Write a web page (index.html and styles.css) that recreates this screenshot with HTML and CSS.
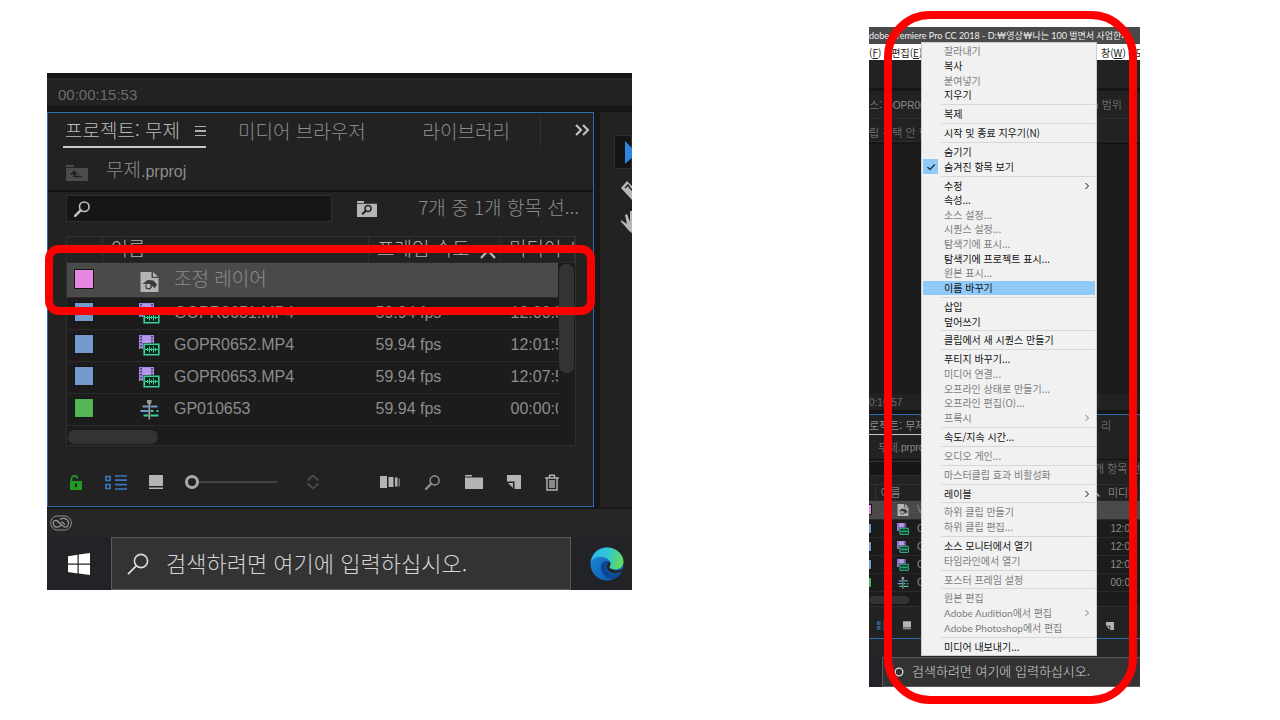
FILE: index.html
```html
<!DOCTYPE html>
<html lang="ko">
<head>
    <meta charset="utf-8" />
    <title>조정 레이어 이름 바꾸기</title>
    <link rel="stylesheet" href="styles.css">
</head>
<body>

<!-- icons -->
<svg class="defs" width="0" height="0" aria-hidden="true">
    <defs>
        <linearGradient id="edgeTop" x1="0" y1="0.3" x2="1" y2="0.5"><stop offset="0" stop-color="#2bb4ee"/><stop offset="0.5" stop-color="#33c8d0"/><stop offset="1" stop-color="#62dc58"/></linearGradient>
        <linearGradient id="edgeLow" x1="0" y1="0" x2="1" y2="1"><stop offset="0" stop-color="#1b8fe0"/><stop offset="1" stop-color="#0c4fa0"/></linearGradient>
    </defs>
    <symbol id="i-find" viewBox="0 0 20 20"><circle cx="12.5" cy="7.5" r="5.3" fill="none" stroke="currentColor" stroke-width="1.8"/><path d="M8.6 11.4 2.4 17.6" stroke="currentColor" stroke-width="2.8" stroke-linecap="round"/></symbol>
    <symbol id="i-thin" viewBox="0 0 22 22"><circle cx="14" cy="8" r="6.6" fill="none" stroke="currentColor" stroke-width="1.6"/><path d="M9.3 12.8 1 21.2" stroke="currentColor" stroke-width="1.8"/></symbol>
    <symbol id="i-up" viewBox="0 0 22 16"><path d="M0 0h8v2H0zM0 3h22v13H0z" fill="#4c4c4c"/><path d="M8 12V7m-3 2.500L8 6.500l3 3M8 11.500h8" fill="none" stroke="#222" stroke-width="1.700"/></symbol>
    <symbol id="i-binfind" viewBox="0 0 20 16"><path d="M0 0h7v2H0zM0 2.800h20V16H0z" fill="#b4b4b4"/><circle cx="11" cy="7.500" r="3" fill="none" stroke="#222" stroke-width="1.500"/><path d="m8.800 9.700-3.600 3.600" stroke="#222" stroke-width="2"/></symbol>
    <symbol id="i-adjust" viewBox="0 0 18 20"><path d="M0 0h11v6h7v14H0z" fill="#b4b4b4"/><path d="m12.500 0 5 4.800h-5z" fill="#b4b4b4"/><path d="m2 12 5-4 6 .5 3.500 4-2.500 4-1.500-2.500-3 3.500-4-.5-1-3.500 2-1.500z" fill="#3a3a3a"/><circle cx="8" cy="14" r="2.200" fill="#b4b4b4"/></symbol>
    <symbol id="i-clip" viewBox="0 0 21 21"><path d="M0 0h15v14H0z" fill="#a786e0"/><path d="M2 1v13M13 1v8" stroke="#3c2c58" stroke-width="1.500" stroke-dasharray="1.500 1.500"/><path d="M4 1h7.500v7H4z" fill="#b49aea"/><path d="M4 8h17v13H4z" fill="#1d1d1d"/><path d="M5.200 9.200h14.600v10.600H5.200z" fill="#0d2a20" stroke="#3ccf95" stroke-width="1.600"/><path d="M6 14.500h13M8.500 13v3M10.500 11.500v6M12.500 13v3M14.500 11.500v6M16.500 13v3" stroke="#3ccf95" stroke-width="1"/></symbol>
    <symbol id="i-seq" viewBox="0 0 20 20"><path d="M3 6.500h6M11 6.500h7M1 11h8" stroke="#6f9bd0" stroke-width="2.200"/><path d="M11 11h3M17 11h2M4 15.500h5M11 15.500h8" stroke="#3ccf95" stroke-width="2.200"/><path d="M9.800 2v17.500" stroke="#999" stroke-width="1.800"/><path d="M7.500 0h4.500v3L9.800 5 7.500 3z" fill="#999"/></symbol>
    <symbol id="i-lock" viewBox="0 0 14 15"><path d="M2.500 6.500v-2a3 3 0 0 1 6-1" fill="none" stroke="#1e9a22" stroke-width="1.800"/><path d="M1 6h12v9H1z" fill="#1e9a22"/><path d="M7 8.500v3.500" stroke="#222" stroke-width="2"/></symbol>
    <symbol id="i-list" viewBox="0 0 22 15"><path d="M1 1.500h4v4H1zM1 9.500h4v4H1z" fill="none" stroke="#3a78be" stroke-width="1.700"/><path d="M10 1h12M10 5.200h12M10 9.600h12M10 14h12" stroke="#3a78be" stroke-width="1.700"/></symbol>
    <symbol id="i-thumb" viewBox="0 0 14 15"><path d="M0 0h14v11H0zM0 12.500h14V14H0z" fill="#b4b4b4"/></symbol>
    <symbol id="i-sort" viewBox="0 0 14 16"><path d="m1.500 6.500 5.500-5 5.500 5M1.500 9.500l5.500 5 5.500-5" fill="none" stroke="#4a4a4a" stroke-width="1.800"/></symbol>
    <symbol id="i-auto" viewBox="0 0 20 12"><path d="M0 0h7v12H0zM8.500 1h5v10h-5zM15 1.500h2.500v9H15z" fill="#b4b4b4"/><path d="M18.500 2.500H20v8h-1.500z" fill="#777"/></symbol>
    <symbol id="i-bin" viewBox="0 0 18 14"><path d="M0 0h7v1.500H0zM0 2.500h18V14H0z" fill="#b4b4b4"/></symbol>
    <symbol id="i-new" viewBox="0 0 14 14"><path d="M0 0h14v14H7.500V6.500H0z" fill="#b4b4b4"/><path d="M1 8h5v5z" fill="#b4b4b4"/></symbol>
    <symbol id="i-trash" viewBox="0 0 14 17"><path d="M0 4h14M4.500 3.500V1.200h5v2.300M2 4.500V16h10V4.500M5 6v8M7 6v8M9 6v8" fill="none" stroke="#b4b4b4" stroke-width="1.400"/></symbol>
    <symbol id="i-win" viewBox="0 0 22 22"><path d="M0 3.200 9.500 1.800v8.700H0zM10.700 1.600 22 0v10.500H10.700zM0 11.700h9.500v8.700L0 19zM10.700 11.700H22V22l-11.300-1.500z" fill="#fff"/></symbol>
    <symbol id="i-cc" viewBox="0 0 22 16"><g fill="none" stroke="#929292"><path d="M7.500 1C3.500 1 .8 4 .8 8s2.800 7 6.700 7h7c4 0 6.800-3 6.800-7s-2.800-7-6.800-7z"/><path d="m9.800 8.500-2-2C5 4 2.800 6.500 3.300 9c.7 3.500 4.500 4 6.700 2l1.800-1.500" stroke-width="1.300"/><path d="m7 5.500 6.500 6c3 1.800 5.800-1 5-4.500-1.200-4-6-4.500-8.500-2.500M11.500 6.500l3.500 3.200" stroke-width="1.300"/></g></symbol>
    <symbol id="i-edge" viewBox="0 0 34 34"><circle cx="17" cy="17" r="16.500" fill="url(#edgeLow)"/><path d="M.8 14.500C2.300 6 9 .5 17 .5c9.500 0 16.500 7 16.500 14 0 5-3.500 8-8.300 8-4 0-6.200-1.800-5.700-3.200.9-2 1.200-3 .5-4.500C18.800 12 15.500 10 11 9.800 6.500 9.600 3 11.500.8 14.500z" fill="url(#edgeTop)"/><path d="M11.500 17c-2 6 1.500 13 8.500 14.500 4.500.8 9-1.500 11.500-6-7 4-14 2-15.500-4-.7-3 1-5.500 3.600-6.500-3-2-7-1-8.100 2z" fill="#0b4796"/><path d="M20 14.800c-2.600 1-4.100 4-3.200 6.800 1.500 4.500 8.500 6.500 15.200 3l1.500-3c-3 2.500-9 2.500-12.500.5-1.800-1-1.700-2.200-1-3.300.8-1.300.7-2.700 0-4z" fill="#23272c"/></symbol>
    <symbol id="i-more" viewBox="0 0 14 12"><path d="m1 1 5 5-5 5M8 1l5 5-5 5" fill="none" stroke="#c0c0c0" stroke-width="2.200"/></symbol>
    <symbol id="i-check" viewBox="0 0 10 10"><path d="m1.500 5 2.500 2.500L8.800 2.500" fill="none" stroke="#16354f" stroke-width="1.300"/></symbol>
    <symbol id="i-next" viewBox="0 0 6 8"><path d="m1.500 1 3 3-3 3" fill="none" stroke="currentColor" stroke-width="1"/></symbol>
    <symbol id="i-asc" viewBox="0 0 16 10"><path d="m1 9 7-7.500L15 9" fill="none" stroke="#b8b8b8" stroke-width="2.200"/></symbol>
</svg>

<main class="slide">

    <!-- project panel -->
    <section class="shot project-shot">
        <div class="screen">
            <div class="source-time">00:00:15:53</div>
            <div class="work">
                <div class="panel">
                    <nav class="tabs">
                        <a class="tab on" href="#">프로젝트: 무제<span class="burger"></span></a>
                        <a class="tab" href="#">미디어 브라우저</a>
                        <a class="tab last" href="#">라이브러리</a>
                        <button class="icon-btn more" aria-label="더 보기"><svg width="14" height="12"><use href="#i-more"/></svg></button>
                    </nav>
                    <div class="path"><svg width="22" height="16"><use href="#i-up"/></svg><span>무제<span class="latin">.prproj</span></span></div>
                    <div class="filter">
                        <label class="find"><svg width="18" height="18"><use href="#i-find"/></svg><input type="text" aria-label="검색"></label>
                        <button class="icon-btn" aria-label="저장소 검색"><svg width="20" height="16"><use href="#i-binfind"/></svg></button>
                        <span class="count">7개 중 1개 항목 선...</span>
                    </div>
                    <div class="list">
                        <table>
                            <colgroup><col class="c-label"><col><col class="c-rate"><col class="c-start"></colgroup>
                            <thead>
                                <tr><th></th><th>이름</th><th>프레임 속도<svg class="asc" width="16" height="10"><use href="#i-asc"/></svg></th><th>미디어 시</th></tr>
                            </thead>
                            <tbody>
                                <tr class="picked"><td><i class="chip pink"></i></td><td><svg width="18" height="20"><use href="#i-adjust"/></svg><span class="ko">조정 레이어</span></td><td></td><td></td></tr>
                                <tr><td><i class="chip blue"></i></td><td><svg width="21" height="21"><use href="#i-clip"/></svg>GOPR0651.MP4</td><td>59.94 fps</td><td>12:00:5</td></tr>
                                <tr><td><i class="chip blue"></i></td><td><svg width="21" height="21"><use href="#i-clip"/></svg>GOPR0652.MP4</td><td>59.94 fps</td><td>12:01:5</td></tr>
                                <tr><td><i class="chip blue"></i></td><td><svg width="21" height="21"><use href="#i-clip"/></svg>GOPR0653.MP4</td><td>59.94 fps</td><td>12:07:5</td></tr>
                                <tr><td><i class="chip green"></i></td><td><svg width="20" height="20"><use href="#i-seq"/></svg>GP010653</td><td>59.94 fps</td><td>00:00:0</td></tr>
                            </tbody>
                        </table>
                        <div class="hscroll"><span></span></div>
                        <div class="vscroll"><span></span></div>
                    </div>
                    <div class="tools">
                        <button class="icon-btn" aria-label="잠금"><svg width="14" height="15"><use href="#i-lock"/></svg></button>
                        <button class="icon-btn" aria-label="목록 보기"><svg width="22" height="15"><use href="#i-list"/></svg></button>
                        <button class="icon-btn" aria-label="아이콘 보기"><svg width="14" height="15"><use href="#i-thumb"/></svg></button>
                        <input class="size" type="range" min="0" max="100" value="0" aria-label="크기">
                        <button class="icon-btn sort" aria-label="정렬"><svg width="14" height="16"><use href="#i-sort"/></svg></button>
                        <div class="actions">
                            <button class="icon-btn" aria-label="시퀀스 자동화"><svg width="20" height="12"><use href="#i-auto"/></svg></button>
                            <button class="icon-btn" aria-label="찾기"><svg width="17" height="17"><use href="#i-find"/></svg></button>
                            <button class="icon-btn" aria-label="새 저장소"><svg width="18" height="14"><use href="#i-bin"/></svg></button>
                            <button class="icon-btn" aria-label="새 항목"><svg width="14" height="14"><use href="#i-new"/></svg></button>
                            <button class="icon-btn" aria-label="지우기"><svg width="14" height="17"><use href="#i-trash"/></svg></button>
                        </div>
                    </div>
                </div>
                <div class="toolbox">
                    <button class="icon-btn arrow" aria-label="선택"><svg width="24" height="32" viewBox="0 0 24 32"><path d="M10 5v23l12-11z" fill="#2f86e0"/></svg></button>
                    <button class="icon-btn" aria-label="자르기"><svg width="24" height="20" viewBox="0 0 24 20"><path d="m7 8 6-7 12 12-7 7z" fill="#b8b8b8"/><path d="m11 8 3-3 2 3 4 4" fill="none" stroke="#222" stroke-width="1.500"/></svg></button>
                    <button class="icon-btn" aria-label="손"><svg width="24" height="22" viewBox="0 0 24 22"><path d="m7 9 6 4-2-9 2-1 3 8 0-11h2v10l2-9h2v11l2-4v14h-6c-4-2-6-7-11-11z" fill="#b8b8b8"/></svg></button>
                </div>
            </div>
            <div class="status"><svg width="22" height="16"><use href="#i-cc"/></svg></div>
            <div class="taskbar">
                <button class="icon-btn start" aria-label="시작"><svg width="22" height="22"><use href="#i-win"/></svg></button>
                <label class="search"><svg width="22" height="22"><use href="#i-thin"/></svg><input type="text" placeholder="검색하려면 여기에 입력하십시오." aria-label="검색"></label>
                <button class="icon-btn edge" aria-label="Edge"><svg width="34" height="34"><use href="#i-edge"/></svg></button>
            </div>
        </div>
        <div class="mark mark-row"></div>
    </section>

    <!-- context menu -->
    <section class="shot menu-shot">
        <div class="screen">
            <div class="titlebar">dobe Premiere Pro CC 2018 - D:₩영상₩나는 100 벌면서 사업한다</div>
            <div class="menubar">
                <span>(<u>F</u>)</span><span>편집(<u>E</u>)</span>
                <span class="far">창(<u>W</u>)</span><span>도</span>
            </div>
            <div class="monitor">
                <div class="m-tabs"><span>스: <span class="latin">GOPR065</span></span><span class="far">n 범위</span></div>
                <div class="m-note">립 선택 안 함</div>
                <div class="m-view"></div>
                <div class="m-time">0:16:57</div>
            </div>
            <div class="panel">
                <div class="tabs"><span class="tab on">로젝트: 무제</span><span class="far">리</span></div>
                <div class="path">무제<span class="latin">.prproj</span></div>
                <div class="filter"><span class="find"></span><span class="count">개 항목 선</span></div>
                <div class="list">
                    <table>
                        <colgroup><col class="c-label"><col><col class="c-start"></colgroup>
                        <thead><tr><th></th><th>이름</th><th><svg class="asc" width="10" height="8"><use href="#i-asc"/></svg>미디어</th></tr></thead>
                        <tbody>
                            <tr class="picked"><td><i class="chip pink"></i></td><td><svg width="12" height="12"><use href="#i-adjust"/></svg>V</td><td></td></tr>
                            <tr><td><i class="chip blue"></i></td><td><svg width="12" height="12"><use href="#i-clip"/></svg>G</td><td>12:00</td></tr>
                            <tr><td><i class="chip blue"></i></td><td><svg width="12" height="12"><use href="#i-clip"/></svg>G</td><td>12:01</td></tr>
                            <tr><td><i class="chip blue"></i></td><td><svg width="12" height="12"><use href="#i-clip"/></svg>G</td><td>12:07</td></tr>
                            <tr><td><i class="chip green"></i></td><td><svg width="12" height="12"><use href="#i-seq"/></svg>G</td><td>00:00</td></tr>
                        </tbody>
                    </table>
                    <div class="hscroll"><span></span></div>
                </div>
                <div class="tools">
                    <svg width="13" height="9"><use href="#i-list"/></svg>
                    <svg width="8" height="9"><use href="#i-thumb"/></svg>
                    <svg class="far" width="8" height="8"><use href="#i-new"/></svg>
                </div>
            </div>
            <div class="status"></div>
            <div class="taskbar">
                <label class="search"><svg width="12" height="12" viewBox="0 0 12 12"><circle cx="6" cy="6" r="3.800" fill="none" stroke="#ddd" stroke-width="1.300"/></svg><input type="text" placeholder="검색하려면 여기에 입력하십시오." aria-label="검색"></label>
            </div>
        </div>

        <div class="menu" role="menu">
            <button role="menuitem" disabled>잘라내기</button>
            <button role="menuitem">복사</button>
            <button role="menuitem" disabled>붙여넣기</button>
            <button role="menuitem">지우기</button>
            <hr>
            <button role="menuitem">복제</button>
            <hr>
            <button role="menuitem">시작 및 종료 지우기(N)</button>
            <hr>
            <button role="menuitem">숨기기</button>
            <button role="menuitem"><span class="tick"><svg width="10" height="10"><use href="#i-check"/></svg></span>숨겨진 항목 보기</button>
            <hr>
            <button role="menuitem">수정<svg class="next" width="6" height="8"><use href="#i-next"/></svg></button>
            <button role="menuitem">속성...</button>
            <button role="menuitem" disabled>소스 설정...</button>
            <button role="menuitem" disabled>시퀀스 설정...</button>
            <button role="menuitem" disabled>탐색기에 표시...</button>
            <button role="menuitem">탐색기에 프로젝트 표시...</button>
            <button role="menuitem" disabled>원본 표시...</button>
            <button role="menuitem" class="hot">이름 바꾸기</button>
            <hr>
            <button role="menuitem">삽입</button>
            <button role="menuitem">덮어쓰기</button>
            <hr>
            <button role="menuitem">클립에서 새 시퀀스 만들기</button>
            <hr>
            <button role="menuitem">푸티지 바꾸기...</button>
            <button role="menuitem" disabled>미디어 연결...</button>
            <button role="menuitem" disabled>오프라인 상태로 만들기...</button>
            <button role="menuitem" disabled>오프라인 편집(O)...</button>
            <button role="menuitem" disabled>프록시<svg class="next" width="6" height="8"><use href="#i-next"/></svg></button>
            <hr>
            <button role="menuitem">속도/지속 시간...</button>
            <hr>
            <button role="menuitem" disabled>오디오 게인...</button>
            <hr>
            <button role="menuitem" disabled>마스터클립 효과 비활성화</button>
            <hr>
            <button role="menuitem">레이블<svg class="next" width="6" height="8"><use href="#i-next"/></svg></button>
            <hr>
            <button role="menuitem" disabled>하위 클립 만들기</button>
            <button role="menuitem" disabled>하위 클립 편집...</button>
            <hr>
            <button role="menuitem">소스 모니터에서 열기</button>
            <button role="menuitem" disabled>타임라인에서 열기</button>
            <hr>
            <button role="menuitem" disabled>포스터 프레임 설정</button>
            <hr>
            <button role="menuitem" disabled>원본 편집</button>
            <button role="menuitem" class="app" disabled>Adobe Audition에서 편집<svg class="next" width="6" height="8"><use href="#i-next"/></svg></button>
            <button role="menuitem" class="app" disabled>Adobe Photoshop에서 편집</button>
            <hr>
            <button role="menuitem">미디어 내보내기...</button>
        </div>
        <div class="mark mark-menu"></div>
    </section>

</main>

</body>
</html>
```
FILE: styles.css
```css
* { box-sizing: border-box; }
body { margin: 0; background: #fff; font-family: "Noto Sans CJK KR", "Liberation Sans", sans-serif; font-weight: 300; }
button, input { font: inherit; color: inherit; }
svg { display: block; flex: none; }
a { color: inherit; text-decoration: none; }
.defs { position: absolute; }
.far { margin-left: auto; }
.latin { font-family: "Liberation Sans", sans-serif; }
.icon-btn { display: flex; align-items: center; padding: 0; border: 0; background: none; }

.slide { display: grid; grid-template-columns: minmax(0, 585fr) minmax(0, 271fr); column-gap: 237px; align-items: start; padding: 27px 140px 17px 47px; }
.shot { position: relative; }
.screen { overflow: hidden; background: #171717; color: #8c8c8c; white-space: nowrap; }
.mark { position: absolute; border: 8px solid #f00; pointer-events: none; }
.mark-row { top: 172px; left: -2px; right: 37px; height: 70px; border-radius: 14px; }
.mark-menu { top: -16px; bottom: -17px; left: 15px; right: 3px; border-radius: 46px; }

.panel { background: #222; border: 1px solid #2d6cb0; }
.tabs, .path, .filter, .tools, .actions, .taskbar, .search, .menubar, .m-tabs { display: flex; align-items: center; }
.list { position: relative; background: #1c1c1c; border: 1px solid #303030; }
table { width: 100%; table-layout: fixed; border-collapse: collapse; }
th, td { padding: 0; text-align: left; font-weight: 300; border-bottom: 1px solid #2a2a2a; }
th { background: #222; color: #b0b0b0; border-right: 1px solid #303030; }
td { font-family: "Liberation Sans", sans-serif; }
td svg { display: inline-block; vertical-align: middle; }
.asc { display: inline-block; vertical-align: middle; }
.picked td { background: #4a4a4a; }
.chip { display: block; border: 1px solid #151515; }
.pink { background: #e687e2; }
.blue { background: #739ccd; }
.green { background: #52b656; }
.hscroll span, .vscroll span { display: block; background: #333; border-radius: 7px; }
.search { background: #333; border: 1px solid #5a5a5a; color: #ddd; }
.search input { flex: 1; min-width: 0; padding: 0 0 4px; border: 0; background: none; outline: 0; }
.search input::placeholder { color: #d4d4d4; opacity: 1; }

/* left */
.project-shot { margin-top: 46px; }
.source-time { margin-top: 5px; height: 28px; padding-left: 11px; border-top: 2px solid #2a2a2a; background: #222; font: 15px/30px "Liberation Sans", sans-serif; color: #6c6c6c; }
.work { display: flex; gap: 6px; margin-top: 6px; }
.project-shot .panel { flex: 1; min-width: 0; }
.project-shot .tabs { height: 34px; padding: 0 4px 0 15px; font-size: 19px; line-height: 33px; }
.tab.on { display: flex; align-items: center; border-bottom: 2px solid #c8c8c8; color: #bcbcbc; }
.project-shot .tab.on { gap: 15px; padding-left: 2px; margin-right: 32px; }
.burger { width: 11px; height: 10px; margin-top: 3px; border: solid #b0b0b0; border-width: 1px 0; background: linear-gradient(#b0b0b0, #b0b0b0) center / 100% 2px no-repeat; }
.tab.last { margin-left: auto; padding-right: 30px; border-right: 1px solid #303030; }
.more { margin-left: 34px; }
.project-shot .path { height: 43px; gap: 18px; padding: 3px 18px 0; font-size: 19px; line-height: 40px; }
.path .latin { font-size: 16px; }
.project-shot .path svg { margin-top: 6px; }
.project-shot .filter { height: 35px; padding: 0 14px 0 18px; border-top: 2px solid #111; font-size: 19px; line-height: 30px; }
.find { display: flex; flex: 1; align-items: center; height: 27px; padding-left: 6px; background: #161616; border: 1px solid #2e2e2e; color: #c0c0c0; }
.find input { flex: 1; min-width: 0; border: 0; background: none; outline: 0; }
.project-shot .find { margin-right: 25px; }
.project-shot .count { margin-left: 41px; padding-bottom: 4px; }
.project-shot .list { margin: 11px 17px 0 18px; height: 210px; font-size: 16px; }
.project-shot .c-label { width: 35px; }
.project-shot .c-rate { width: 132px; }
.project-shot .c-start { width: 74px; }
.project-shot th { height: 25px; padding: 0 0 3px 8px; font-size: 19px; line-height: 21px; }
.project-shot th:last-child { overflow: hidden; }
.project-shot th .asc { margin: 6px 0 0 10px; }
.project-shot td { height: 32px; padding: 0 0 2px 7px; line-height: 29px; }
.project-shot .picked td { height: 33px; }
.project-shot td:nth-child(2) { padding-left: 37px; }
.project-shot td:nth-child(4) { padding-left: 10px; }
.project-shot td svg { width: 21px; margin-right: 14px; }
.ko { font-family: "Noto Sans CJK KR", sans-serif; font-size: 19px; }
.project-shot .chip { width: 20px; height: 20px; }
.project-shot .hscroll { position: absolute; left: 1px; right: 1px; bottom: 1px; }
.project-shot .hscroll span { width: 90px; height: 14px; }
.vscroll { position: absolute; top: 26px; right: 0; bottom: 0; width: 17px; padding: 1px; background: #1c1c1c; }
.vscroll span { height: 109px; }
.project-shot .tools { height: 60px; gap: 22px; padding: 12px 34px 0 21px; }
.actions { gap: 24px; margin-left: auto; }
.size { -webkit-appearance: none; appearance: none; width: 92px; height: 14px; margin: 0; background: linear-gradient(#444, #444) center / 100% 2px no-repeat; }
.size::-webkit-slider-thumb { -webkit-appearance: none; width: 14px; height: 14px; border: 3px solid #a8a8a8; border-radius: 50%; background: #222; }
.sort { margin-left: 7px; }
.toolbox { display: flex; flex-direction: column; gap: 11px; width: 32px; padding: 23px 0 0 14px; background: #222; }
.arrow { background: #141414; border: 1px solid #303030; }
.project-shot .status { display: flex; align-items: center; height: 28px; margin-top: 2px; padding-left: 3px; background: #262626; }
.project-shot .taskbar { height: 53px; background: #222326; }
.start { justify-content: center; width: 64px; }
.project-shot .search { flex: 1; height: 53px; gap: 17px; padding-left: 15px; font-size: 22px; }
.edge { justify-content: center; width: 61px; padding-left: 11px; }

/* right */
.menu-shot { font-size: 11px; }
.titlebar { height: 17px; background: #4a4a4a; color: #eee; font-family: Lato, "Noto Sans CJK KR", sans-serif; font-size: 9px; font-weight: 400; line-height: 17px; }
.menubar { height: 16px; gap: 10px; background: #fff; color: #222; font-size: 10px; font-weight: 400; }
.menubar .far { width: 24px; }
.menubar span:last-child { width: 5px; }
.monitor { padding-top: 28px; background: #222; }
.m-tabs { height: 29px; padding-right: 18px; border-top: 3px solid #161616; font-size: 11px; }
.m-tabs .latin { font-size: 10px; }
.m-note { height: 24px; margin-top: 1px; border: solid #2c2c2c; border-width: 1px 0; line-height: 26px; }
.m-view { height: 252px; background: #1c1c1c; border-top: 2px solid #161616; }
.m-time { height: 20px; border-bottom: 4px solid #161616; color: #6c6c6c; font: 10px/18px "Liberation Sans", sans-serif; }
.menu-shot .panel { border-width: 1px 0; height: 225px; }
.menu-shot .tabs { height: 20px; padding-right: 29px; line-height: 18px; }
.menu-shot .tab.on { border-width: 1px; }
.menu-shot .path { height: 25px; padding-left: 9px; border-bottom: 1px solid #111; }
.menu-shot .path .latin { font-size: 10px; }
.menu-shot .filter { height: 16px; }
.menu-shot .find { height: 15px; margin-right: 10px; }
.menu-shot .count { width: 46px; }
.menu-shot .list { margin-top: 8px; border-width: 1px 0; font-size: 10px; }
.menu-shot .c-label { width: 6px; }
.menu-shot .c-start { width: 50px; }
.menu-shot th { height: 15px; padding-left: 5px; font-size: 11px; line-height: 14px; }
.menu-shot th:last-child { padding: 0; }
.menu-shot th .asc { margin-right: 8px; }
.menu-shot td { height: 18px; line-height: 17px; }
.menu-shot .picked td { height: 19px; }
.menu-shot td:nth-child(2) { padding-left: 22px; }
.menu-shot td:nth-child(3) { padding-left: 21px; }
.menu-shot td svg { margin-right: 8px; }
.menu-shot .chip { width: 3px; height: 11px; border-width: 1px 1px 1px 0; }
.menu-shot .hscroll { padding: 4px 0 2px; }
.menu-shot .hscroll span { width: 40px; height: 8px; }
.menu-shot .tools { height: 34px; gap: 13px; padding: 4px 26px 0 8px; }
.menu-shot .status { height: 18px; background: #262626; }
.menu-shot .taskbar { padding-left: 13px; background: #222326; }
.menu-shot .search { flex: 1; height: 30px; gap: 7px; padding-left: 10px; border-right: 0; font-size: 13px; }

.menu { position: absolute; top: 15px; bottom: 31px; left: 52px; right: 43px; display: flex; flex-direction: column; background: #f1f1f1; border: 1px solid #ccc; padding: 1px; font-size: 10px; font-weight: 400; color: #111; white-space: nowrap; }
.menu button { position: relative; display: flex; flex: 1 1 14px; align-items: center; min-height: 0; padding: 0 0 0 21px; border: 0; background: none; line-height: 14px; }
.menu button:disabled { color: #7d7d7d; }
.menu .app { font-family: Lato, "Noto Sans CJK KR", sans-serif; }
.menu .hot { background: #91c9f7; }
.menu hr { flex: 0.4 1 4px; width: auto; margin: 0 0 0 18px; border: 0; background: linear-gradient(#d7d7d7, #d7d7d7) center / 100% 1px no-repeat; }
.next { margin: 0 5px 0 auto; }
.tick { position: absolute; left: 0; top: 0; bottom: 0; display: grid; place-items: center; width: 15px; background: #91c9f7; }
```
